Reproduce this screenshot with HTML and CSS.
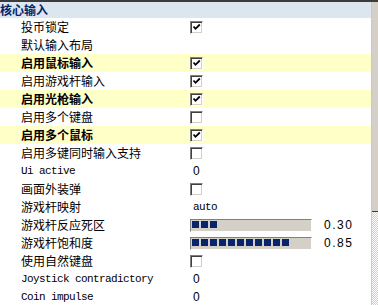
FILE: index.html
```html
<!DOCTYPE html>
<html>
<head>
<meta charset="utf-8">
<link rel="stylesheet" href="styles.css">
</head>
<body>
<div class="topline"></div>
<div class="frame">
  <div class="grid">
    <div class="header">核心输入</div>
    <div class="row"><span class="label">投币锁定</span><span class="val"><span class="cb on"><svg viewBox="0 0 9 9"><path d="M1.5 3.5 L3.5 5.8 L7.8 1.5"/></svg></span></span></div>
    <div class="row"><span class="label">默认输入布局</span><span class="val"></span></div>
    <div class="row hl"><span class="label b">启用鼠标输入</span><span class="val"><span class="cb on"><svg viewBox="0 0 9 9"><path d="M1.5 3.5 L3.5 5.8 L7.8 1.5"/></svg></span></span></div>
    <div class="row"><span class="label">启用游戏杆输入</span><span class="val"><span class="cb on"><svg viewBox="0 0 9 9"><path d="M1.5 3.5 L3.5 5.8 L7.8 1.5"/></svg></span></span></div>
    <div class="row hl"><span class="label b">启用光枪输入</span><span class="val"><span class="cb on"><svg viewBox="0 0 9 9"><path d="M1.5 3.5 L3.5 5.8 L7.8 1.5"/></svg></span></span></div>
    <div class="row"><span class="label">启用多个键盘</span><span class="val"><span class="cb"></span></span></div>
    <div class="row hl"><span class="label b">启用多个鼠标</span><span class="val"><span class="cb on"><svg viewBox="0 0 9 9"><path d="M1.5 3.5 L3.5 5.8 L7.8 1.5"/></svg></span></span></div>
    <div class="row"><span class="label">启用多键同时输入支持</span><span class="val"><span class="cb"></span></span></div>
    <div class="row"><span class="label mono">Ui active</span><span class="val num">0</span></div>
    <div class="row"><span class="label">画面外装弹</span><span class="val"><span class="cb"></span></span></div>
    <div class="row"><span class="label">游戏杆映射</span><span class="val mono">auto</span></div>
    <div class="row"><span class="label">游戏杆反应死区</span><span class="val"><span class="bar"><span class="fill" style="width:27px"></span></span><span class="num wide">0.30</span></span></div>
    <div class="row"><span class="label">游戏杆饱和度</span><span class="val"><span class="bar"><span class="fill" style="width:99px"></span></span><span class="num wide">0.85</span></span></div>
    <div class="row"><span class="label">使用自然键盘</span><span class="val"><span class="cb"></span></span></div>
    <div class="row"><span class="label mono">Joystick contradictory</span><span class="val num">0</span></div>
    <div class="row"><span class="label mono">Coin impulse</span><span class="val num">0</span></div>
  </div>
  <div class="scroll">
    <div class="thumb"></div>
    <div class="track"></div>
  </div>
</div>
</body>
</html>
```
FILE: styles.css
```css
html, body {
  margin: 0;
  padding: 0;
  width: 378px;
  height: 305px;
  overflow: hidden;
  background: #fff;
  font-family: "Noto Sans CJK SC", "Noto Sans", sans-serif;
  font-size: 12px;
  color: #000;
}
.topline {
  height: 2px;
  background: #3c3c3c;
}
.frame {
  display: flex;
  height: 303px;
}
.grid {
  width: 372px;
  display: flex;
  flex-direction: column;
}
.header {
  height: 16px;
  line-height: 16px;
  background: #dce6ee;
  color: #0a246a;
  font-weight: bold;
  padding-left: 0;
}
.row {
  height: 18px;
  line-height: 18px;
  display: flex;
  align-items: center;
  flex-shrink: 0;
}
.row.hl {
  background: #ffffc8;
}
.label {
  width: 169px;
  padding-left: 21px;
  white-space: nowrap;
}
.label.b {
  font-weight: bold;
}
.mono {
  font-family: "Liberation Mono", "DejaVu Sans Mono", monospace;
  font-size: 11px;
  letter-spacing: -0.6px;
}
.val {
  display: flex;
  align-items: center;
}
.val.mono {
  padding-left: 3px;
}
.num {
  font-family: "Liberation Sans", Arial, sans-serif;
  font-size: 12px;
}
.val.num {
  padding-left: 3px;
}
.num.wide {
  margin-left: 12px;
  letter-spacing: 1.5px;
}
.cb {
  width: 9px;
  height: 9px;
  background: #fff;
  border-top: 1px solid #808080;
  border-left: 1px solid #808080;
  border-right: 1px solid #ffffff;
  border-bottom: 1px solid #ffffff;
  box-shadow: inset 1px 1px 0 #404040, inset -1px -1px 0 #d4d0c8;
  padding: 1px;
  display: flex;
  margin-top: 1px;
}
.cb svg {
  width: 9px;
  height: 9px;
  fill: none;
  stroke: #000;
  stroke-width: 1.8;
}
.bar {
  width: 117px;
  height: 9px;
  background: #d4d0c8;
  border-top: 1px solid #808080;
  border-left: 1px solid #808080;
  border-right: 1px solid #ffffff;
  border-bottom: 1px solid #ffffff;
  padding: 1px 2px 1px 1px;
  display: flex;
}
.fill {
  height: 7px;
  margin-top: 0;
  background: repeating-linear-gradient(90deg, #0a246a 0 7px, transparent 7px 9px);
}
.scroll {
  width: 6px;
  display: flex;
  flex-direction: column;
  border-left: 1px solid #c8c8c8;
}
.thumb {
  height: 209px;
  background: #d4d0c8;
  border-bottom: 1px solid #404040;
}
.track {
  flex: 1;
  background-image: repeating-conic-gradient(#d4d0c8 0 25%, #ffffff 0 50%);
  background-size: 2px 2px;
}
```
